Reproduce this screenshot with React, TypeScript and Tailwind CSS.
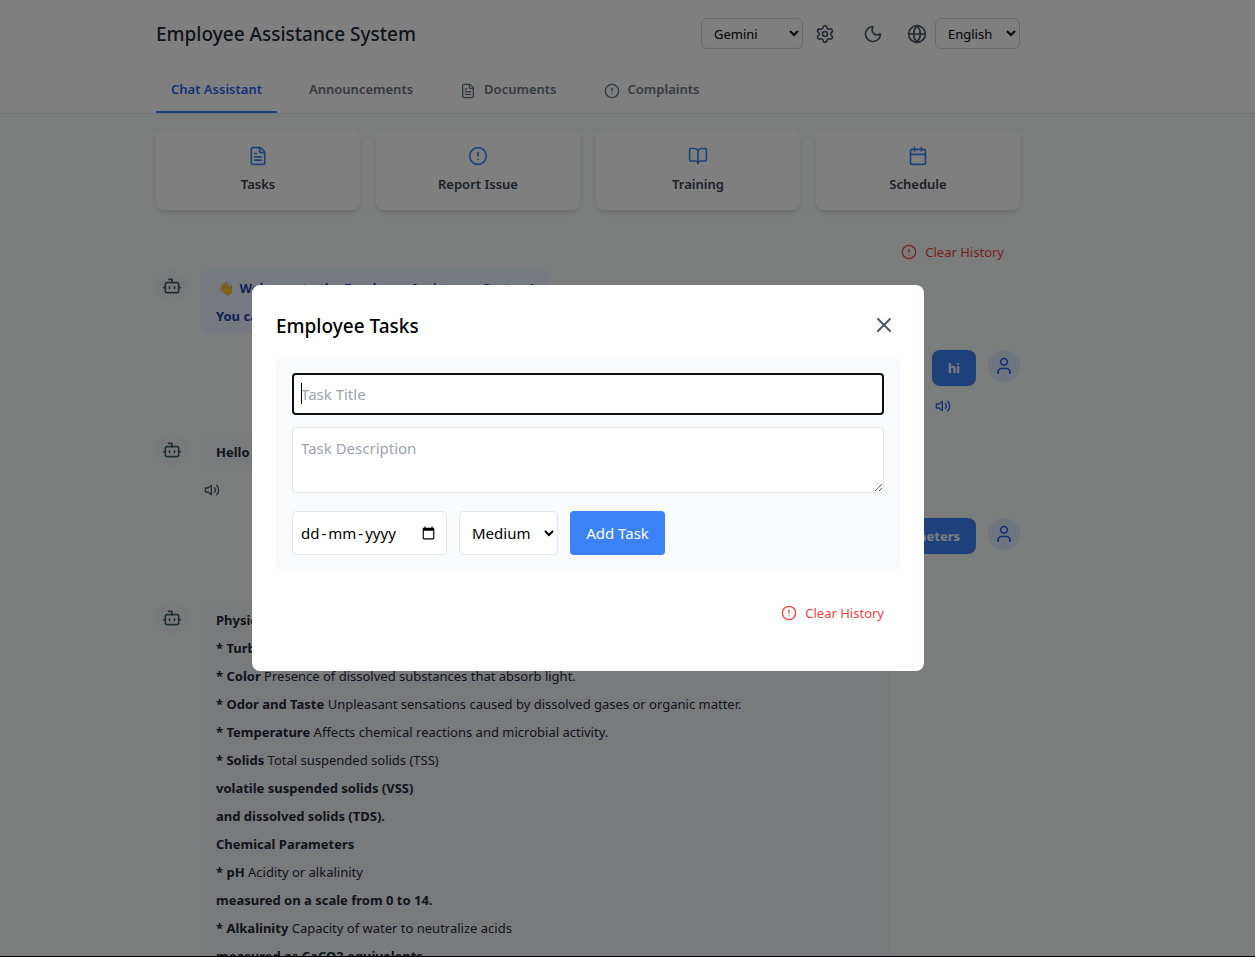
import { useEffect, useRef, useState, type ReactNode } from "react";
import {
  FileText, BookOpen, Calendar, Settings, Moon, Globe, Bot, User, X, CircleAlert,
} from "lucide-react";

function SpeakerIcon() {
  return (
    <svg className="size-4" viewBox="0 0 24 24" fill="none" stroke="currentColor" strokeWidth="2" strokeLinecap="round" strokeLinejoin="round" aria-hidden="true">
      <polygon points="11 5 6 9 2 9 2 15 6 15 11 19 11 5" />
      <path d="M15.54 8.46a5 5 0 0 1 0 7.07" />
      <path d="M19.07 4.93a10 10 0 0 1 0 14.14" />
    </svg>
  );
}

const tabBase = "flex h-[46px] items-center gap-2 border-b-2 px-[15px] pt-0.5 text-[13px] font-semibold";

function Tab({ label, icon, active }: { label: string; icon?: ReactNode; active?: boolean }) {
  return (
    <button className={`${tabBase} ${active ? "border-[#3b82f6] text-[#2563eb]" : "border-transparent text-[#6b7280]"}`}>
      {icon && <span className="mt-0.5">{icon}</span>}
      {label}
    </button>
  );
}

function ActionCard({ label, icon }: { label: string; icon: ReactNode }) {
  return (
    <button className="flex h-20 flex-col items-center justify-center gap-2 rounded-lg bg-white text-[13px] leading-5 font-semibold text-[#374151] shadow-md">
      <span className="text-[#3b82f6]">{icon}</span>
      {label}
    </button>
  );
}

function ClearHistory() {
  return (
    <button className="flex items-center gap-2 text-[13px] leading-5 text-[#ef4444]">
      <CircleAlert size={16} />
      Clear History
    </button>
  );
}

function BotMessage({ children, tone }: { children: ReactNode; tone: string }) {
  return (
    <div className="flex items-start gap-3">
      <div className="flex size-8 shrink-0 items-center justify-center rounded-full bg-[#f3f4f6] text-[#4b5563]">
        <Bot size={20} />
      </div>
      <div className={`rounded-lg px-4 py-1 text-[13px] leading-7 ${tone}`}>{children}</div>
    </div>
  );
}

function UserMessage({ children }: { children: ReactNode }) {
  return (
    <div className="flex items-start justify-end gap-3">
      <div className="rounded-lg bg-[#3b82f6] px-4 py-1 text-[13px] leading-7 font-bold text-white">{children}</div>
      <div className="flex size-8 shrink-0 items-center justify-center rounded-full bg-[#dbeafe] text-[#2563eb]">
        <User size={20} />
      </div>
    </div>
  );
}

const report: { bold: string; text?: string }[] = [
  { bold: "Physical Parameters" },
  { bold: "* Turbidity", text: "Cloudiness caused by suspended particles." },
  { bold: "* Color", text: "Presence of dissolved substances that absorb light." },
  { bold: "* Odor and Taste", text: "Unpleasant sensations caused by dissolved gases or organic matter." },
  { bold: "* Temperature", text: "Affects chemical reactions and microbial activity." },
  { bold: "* Solids", text: "Total suspended solids (TSS)" },
  { bold: "volatile suspended solids (VSS)" },
  { bold: "and dissolved solids (TDS)." },
  { bold: "Chemical Parameters" },
  { bold: "* pH", text: "Acidity or alkalinity" },
  { bold: "measured on a scale from 0 to 14." },
  { bold: "* Alkalinity", text: "Capacity of water to neutralize acids" },
  { bold: "measured as CaCO3 equivalents." },
];

function DueDate() {
  const [value, setValue] = useState("");
  return (
    <label className="relative flex w-[155px]">
      <input
        type="date"
        aria-label="Due date"
        value={value}
        onChange={(e) => setValue(e.target.value)}
        className={`w-full rounded-sm border border-[#e5e7eb] bg-white px-2 text-[15px] ${value ? "text-black" : "text-transparent"}`}
      />
      {!value && (
        <span className="pointer-events-none absolute inset-y-0 left-[9px] flex items-center gap-0.5 text-[15px] text-black">
          <span>dd</span><span>-</span><span>mm</span><span>-</span><span>yyyy</span>
        </span>
      )}
    </label>
  );
}

function TaskDialog() {
  const title = useRef<HTMLInputElement>(null);
  useEffect(() => title.current?.focus(), []);
  return (
    <div className="fixed inset-0 flex items-center justify-center border-b border-black bg-black/50 pr-[79px]">
      <div role="dialog" aria-modal="true" aria-labelledby="dialog-title" className="w-full max-w-2xl rounded-lg bg-white p-6">
        <div className="mb-4 flex h-8 items-center justify-between">
          <h2 id="dialog-title" className="pt-0.5 text-[19px] font-medium text-black">Employee Tasks</h2>
          <button aria-label="Close" className="p-1 text-[#4b5563]"><X size={24} /></button>
        </div>
        <form className="flex flex-col rounded-lg bg-[#f9fafb] p-4" onSubmit={(e) => e.preventDefault()}>
          <div className="relative mb-3 flex">
            <input ref={title} aria-label="Task Title" placeholder="Task Title" className="peer h-[42px] w-full rounded-sm border border-[#e5e7eb] bg-white px-2 text-[15px] outline-2 -outline-offset-2 outline-[#101010] placeholder:text-[#9ca3af] placeholder-shown:caret-transparent" />
            <span className="pointer-events-none absolute top-[10px] left-[9px] hidden h-[21px] w-px bg-black peer-placeholder-shown:block" />
          </div>
          <textarea aria-label="Task Description" placeholder="Task Description" rows={2} className="mb-[18px] h-[66px] rounded-sm border border-[#e5e7eb] bg-white p-2 text-[15px] leading-6 placeholder:text-[#9ca3af]" />
          <div className="flex h-11 gap-3">
            <DueDate />
            <select aria-label="Priority" defaultValue="Medium" className="w-[99px] rounded-sm border border-[#e5e7eb] bg-white px-2 text-[15px]">
              <option>Low</option>
              <option>Medium</option>
              <option>High</option>
            </select>
            <button type="submit" className="w-[95px] rounded-sm bg-[#3b82f6] text-[15px] text-white">Add Task</button>
          </div>
        </form>
        <div className="flex justify-end px-4 pt-8 pb-6"><ClearHistory /></div>
      </div>
    </div>
  );
}

export default function App() {
  return (
    <div className="h-screen overflow-hidden bg-[#f7faf8] font-['Noto_Sans','Open_Sans',sans-serif]">
      <header className="border-b border-[#e5e7eb] bg-white pr-[79px]">
        <div className="mx-auto max-w-4xl px-4">
          <div className="flex h-[67px] items-center justify-between">
            <h1 className="pt-0.5 text-[19px] font-medium text-[#1f2937]">Employee Assistance System</h1>
            <div className="flex items-center text-[#4b5563]">
              <select aria-label="Model" className="mr-3 h-[31px] w-[102px] rounded-md border border-[#d1d5db] bg-white px-2 text-[13px] text-black">
                <option>Gemini</option>
              </select>
              <button aria-label="Settings" className="mr-7"><Settings size={20} /></button>
              <button aria-label="Dark mode" className="mr-6"><Moon size={20} /></button>
              <Globe size={20} className="mr-2" />
              <select aria-label="Language" className="h-[31px] w-[85px] rounded-md border border-[#d1d5db] bg-white px-2 text-[13px] text-black">
                <option>English</option>
              </select>
            </div>
          </div>
          <nav className="flex gap-[17px]">
            <Tab label="Chat Assistant" active />
            <Tab label="Announcements" />
            <Tab label="Documents" icon={<FileText size={16} />} />
            <Tab label="Complaints" icon={<CircleAlert size={16} />} />
          </nav>
        </div>
      </header>
      <main className="pr-[79px]">
        <div className="mx-auto max-w-4xl px-4 pt-4">
          <div className="grid grid-cols-4 gap-4">
            <ActionCard label="Tasks" icon={<FileText size={20} />} />
            <ActionCard label="Report Issue" icon={<CircleAlert size={20} />} />
            <ActionCard label="Training" icon={<BookOpen size={20} />} />
            <ActionCard label="Schedule" icon={<Calendar size={20} />} />
          </div>
          <div className="flex justify-end px-4 pt-8 pb-2"><ClearHistory /></div>
          <BotMessage tone="bg-[#edf2ff] text-[#1e40af] font-bold">
            <p><span className="px-0.5">👋</span> Welcome to the Employee Assistance System!</p>
            <p>You can ask me anything.</p>
          </BotMessage>
          <div className="pt-4">
            <UserMessage>hi</UserMessage>
            <div className="flex justify-end pt-3 pr-[69px] text-[#2563eb]"><SpeakerIcon /></div>
          </div>
          <div className="pt-5">
            <BotMessage tone="bg-[#f3f4f6] text-[#1f2937] font-bold">Hello there! How can I help you today?</BotMessage>
            <div className="flex px-12 pt-3 text-[#4b5563]"><SpeakerIcon /></div>
          </div>
          <div className="pt-5"><UserMessage>water quality parameters</UserMessage></div>
          <div className="pt-12">
            <BotMessage tone="w-full max-w-[691px] bg-[#f3f4f6] text-[#1f2937]">
              {report.map((line) => (
                <p key={line.bold}><strong>{line.bold}</strong> {line.text}</p>
              ))}
            </BotMessage>
          </div>
        </div>
      </main>
      <TaskDialog />
    </div>
  );
}
